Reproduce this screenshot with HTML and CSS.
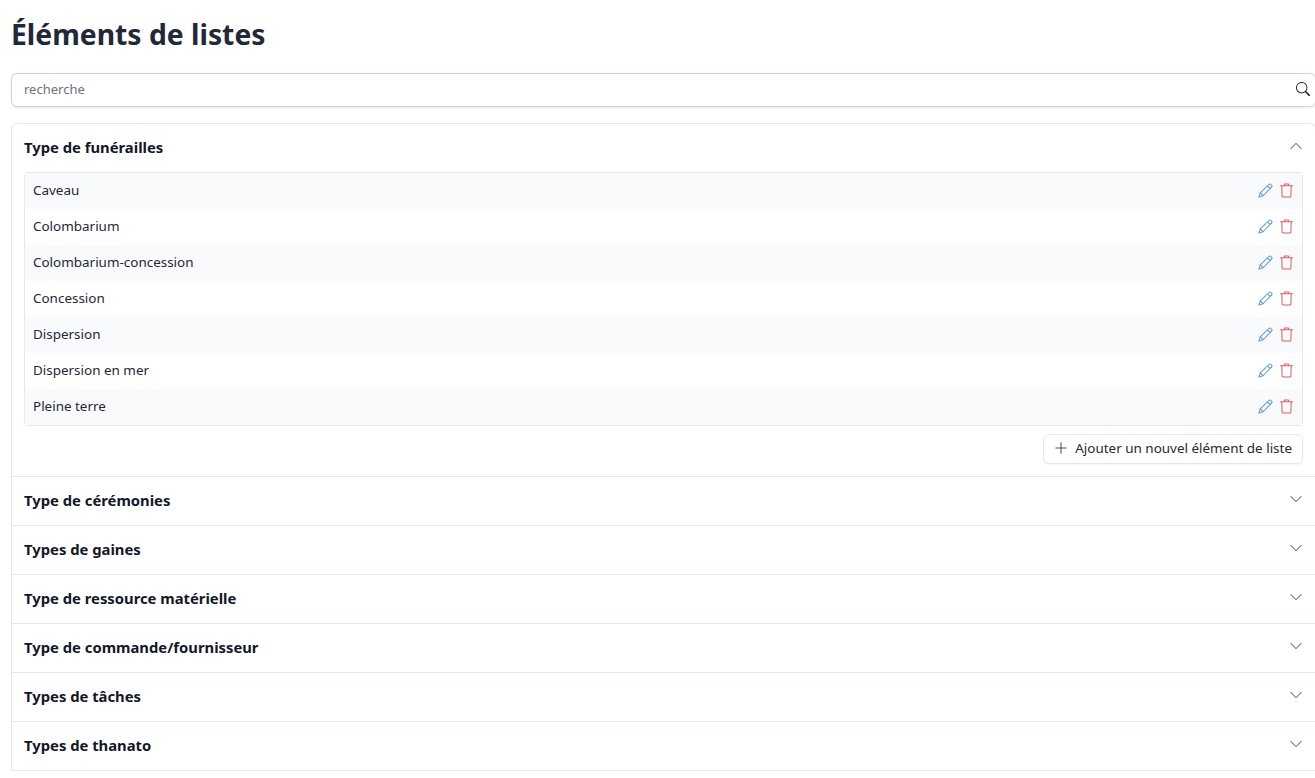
FILE: index.html
```html
<!DOCTYPE html>
<html lang="fr">
<head>
    <meta charset="UTF-8">
    <title>Éléments de listes</title>
    <link rel="stylesheet" href="styles.css">
</head>
<body>
    <svg class="sprites" width="0" height="0">
        <symbol id="i-pencil" viewBox="0 0 16 16"><path d="M11.6 1.6 a1.5 1.5 0 0 1 2.1 0 l.7 .7 a1.5 1.5 0 0 1 0 2.1 L5.4 13.6 1 15 l1.4-4.4 z M10.2 3 13 5.8 M2.6 10.6 5.4 13.4"/></symbol>
        <symbol id="i-trash" viewBox="0 0 16 16"><path d="M1.5 3 h13 M5.6 3 V1.8 a.8 .8 0 0 1 .8-.8 h3.2 a.8 .8 0 0 1 .8 .8 V3 M3 3 3.3 14 a1.1 1.1 0 0 0 1.1 1 h7.2 a1.1 1.1 0 0 0 1.1-1 L13 3"/></symbol>
        <symbol id="i-down" viewBox="0 0 16 16"><path fill-rule="evenodd" d="M1.646 4.646a.5.5 0 0 1 .708 0L8 10.293l5.646-5.647a.5.5 0 0 1 .708.708l-6 6a.5.5 0 0 1-.708 0l-6-6a.5.5 0 0 1 0-.708z"/></symbol>
    </svg>

    <h1 class="page-title">Éléments de listes</h1>

    <div class="search">
        <input class="search-input" type="text" placeholder="recherche">
        <svg class="search-icon" viewBox="0 0 16 16"><path d="M11.742 10.344a6.5 6.5 0 1 0-1.397 1.398h-.001c.03.04.062.078.098.115l3.85 3.85a1 1 0 0 0 1.415-1.414l-3.85-3.85a1.007 1.007 0 0 0-.115-.1zM12 6.5a5.5 5.5 0 1 1-11 0 5.5 5.5 0 0 1 11 0z"/></svg>
    </div>

    <div class="accordion">
        <section class="acc-item open">
            <div class="acc-header">
                <span>Type de funérailles</span>
                <svg class="chevron up"><use href="#i-down"/></svg>
            </div>
            <div class="acc-body">
                <ul class="rows">
                    <li class="row"><span>Caveau</span><span class="row-actions"><svg class="edit"><use href="#i-pencil"/></svg><svg class="del"><use href="#i-trash"/></svg></span></li>
                    <li class="row"><span>Colombarium</span><span class="row-actions"><svg class="edit"><use href="#i-pencil"/></svg><svg class="del"><use href="#i-trash"/></svg></span></li>
                    <li class="row"><span>Colombarium-concession</span><span class="row-actions"><svg class="edit"><use href="#i-pencil"/></svg><svg class="del"><use href="#i-trash"/></svg></span></li>
                    <li class="row"><span>Concession</span><span class="row-actions"><svg class="edit"><use href="#i-pencil"/></svg><svg class="del"><use href="#i-trash"/></svg></span></li>
                    <li class="row"><span>Dispersion</span><span class="row-actions"><svg class="edit"><use href="#i-pencil"/></svg><svg class="del"><use href="#i-trash"/></svg></span></li>
                    <li class="row"><span>Dispersion en mer</span><span class="row-actions"><svg class="edit"><use href="#i-pencil"/></svg><svg class="del"><use href="#i-trash"/></svg></span></li>
                    <li class="row"><span>Pleine terre</span><span class="row-actions"><svg class="edit"><use href="#i-pencil"/></svg><svg class="del"><use href="#i-trash"/></svg></span></li>
                </ul>
                <div class="acc-footer">
                    <button class="add-btn" type="button">
                        <svg class="plus" viewBox="0 0 16 16"><path d="M8 1.5a.6.6 0 0 1 .6.6v5.3h5.3a.6.6 0 0 1 0 1.2H8.6v5.3a.6.6 0 0 1-1.2 0V8.6H2.1a.6.6 0 0 1 0-1.2h5.3V2.1a.6.6 0 0 1 .6-.6z"/></svg>
                        Ajouter un nouvel élément de liste
                    </button>
                </div>
            </div>
        </section>
        <section class="acc-item"><div class="acc-header"><span>Type de cérémonies</span><svg class="chevron"><use href="#i-down"/></svg></div></section>
        <section class="acc-item"><div class="acc-header"><span>Types de gaines</span><svg class="chevron"><use href="#i-down"/></svg></div></section>
        <section class="acc-item"><div class="acc-header"><span>Type de ressource matérielle</span><svg class="chevron"><use href="#i-down"/></svg></div></section>
        <section class="acc-item"><div class="acc-header"><span>Type de commande/fournisseur</span><svg class="chevron"><use href="#i-down"/></svg></div></section>
        <section class="acc-item"><div class="acc-header"><span>Types de tâches</span><svg class="chevron"><use href="#i-down"/></svg></div></section>
        <section class="acc-item"><div class="acc-header"><span>Types de thanato</span><svg class="chevron"><use href="#i-down"/></svg></div></section>
    </div>
</body>
</html>
```

FILE: styles.css
```css
html, body { height: 100%; overflow: hidden; }
body { margin: 0; padding: 16px 0 0 11px; width: 1305px; box-sizing: content-box; background: #fff; color: #1f2937; font-family: "Noto Sans", sans-serif; font-size: 13.45px; }
.sprites { position: absolute; }
.page-title { margin: 0 0 20px; height: 37px; line-height: 37px; font-size: 28.3px; font-weight: 700; color: #1f2937; }

.search { display: flex; align-items: center; height: 34px; box-sizing: border-box; padding: 0 5px 2px 12px; border: 1px solid #cbd5e1; border-radius: 6px; box-shadow: 0 1px 2px rgba(0, 0, 0, 0.08); margin-bottom: 16px; }
.search-input { flex: 1; border: 0; outline: 0; padding: 0; font: inherit; font-size: 13px; color: #1f2937; }
.search-input::placeholder { color: #6b7280; opacity: 1; }
.search-icon { width: 14px; height: 14px; fill: #1f2937; }

.accordion { border: 1px solid #e2e8f0; border-bottom: 0; border-radius: 6px 6px 0 0; }
.acc-item { border-bottom: 1px solid #e2e8f0; }
.acc-header { display: flex; justify-content: space-between; align-items: center; height: 48px; box-sizing: border-box; padding: 0 12px 2px; font-size: 14.8px; font-weight: 700; color: #111827; }
.chevron { width: 14px; height: 14px; fill: #6b7280; margin-top: -3px; }
.chevron.up { transform: rotate(180deg); }

.acc-body { padding: 0 12px 12px; }
.rows { list-style: none; margin: 0; padding: 0; border: 1px solid #e2e8f0; border-radius: 4px; }
.row { display: flex; justify-content: space-between; align-items: center; height: 36px; box-sizing: border-box; padding: 0 8px 2px 8px; }
.row:nth-child(odd) { background: #f8fafc; }
.row-actions { display: flex; align-items: center; gap: 6px; }
.row-actions svg { width: 15px; height: 15px; fill: none; stroke-width: 1.1; stroke-linejoin: round; stroke-linecap: round; }
.edit { stroke: #5b9bd5; }
.del { stroke: #e05f5f; }

.acc-footer { display: flex; justify-content: flex-end; margin-top: 8px; }
.add-btn { display: flex; align-items: center; gap: 7px; height: 30px; box-sizing: border-box; padding: 0 10px 2px; background: #fff; border: 1px solid #e2e8f0; border-radius: 6px; box-shadow: 0 1px 2px rgba(0, 0, 0, 0.05); font: inherit; color: #1f2937; }
.plus { width: 14px; height: 14px; fill: #4b5563; }
```
